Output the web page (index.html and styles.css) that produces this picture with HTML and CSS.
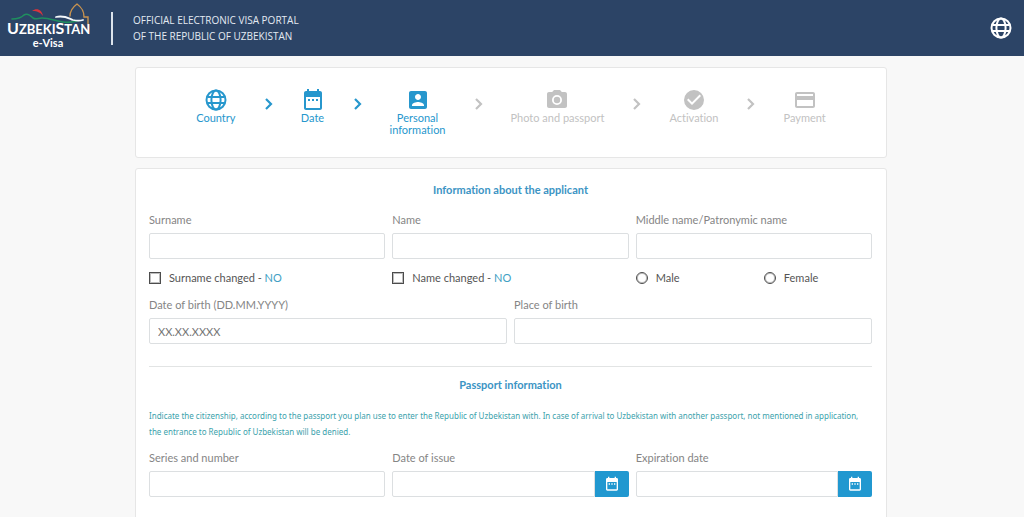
FILE: index.html
```html
<!DOCTYPE html>
<html lang="en">
<head>
<meta charset="utf-8">
<meta name="viewport" content="width=device-width, initial-scale=1">
<title>e-Visa</title>
<link rel="stylesheet" href="styles.css">
</head>
<body>
<svg class="sprite" aria-hidden="true">
  <symbol id="globe" viewBox="0 0 24 24"><g fill="none" stroke="currentColor" stroke-width="2"><circle cx="12" cy="12" r="9.500"/><ellipse cx="12" cy="12" rx="4.600" ry="9.500"/><path d="M3.500 9h17M3.500 15h17"/></g></symbol>
  <symbol id="calendar" viewBox="0 0 24 24"><path fill="currentColor" fill-rule="evenodd" d="M19 3h-1V1h-2v2H8V1H6v2H5c-1.100 0-2 .9-2 2v15c0 1.100.9 2 2 2h14c1.100 0 2-.9 2-2V5c0-1.100-.9-2-2-2zm0 17H5V9h14v11zM7 11h2v2H7zM11 11h2v2h-2zM15 11h2v2h-2z"/></symbol>
  <symbol id="person" viewBox="0 0 24 24"><path fill="currentColor" fill-rule="evenodd" d="M3 5v14c0 1.100.89 2 2 2h14c1.100 0 2-.9 2-2V5c0-1.100-.9-2-2-2H5c-1.110 0-2 .9-2 2zm12 4c0 1.660-1.340 3-3 3s-3-1.340-3-3 1.340-3 3-3 3 1.340 3 3zm-9 8c0-2 4-3.100 6-3.100s6 1.100 6 3.100v1H6v-1z"/></symbol>
  <symbol id="camera" viewBox="0 0 24 24"><path fill="currentColor" fill-rule="evenodd" d="M9 2 7.170 4H4c-1.100 0-2 .9-2 2v12c0 1.100.9 2 2 2h16c1.100 0 2-.9 2-2V6c0-1.100-.9-2-2-2h-3.170L15 2H9zm3 15a5 5 0 1 1 0-10 5 5 0 0 1 0 10zM12 8.800a3.200 3.200 0 1 0 0 6.400 3.200 3.200 0 0 0 0-6.400z"/></symbol>
  <symbol id="check" viewBox="0 0 24 24"><path fill="currentColor" fill-rule="evenodd" d="M12 2a10 10 0 1 0 0 20 10 10 0 0 0 0-20zm-2 15-5-5 1.410-1.410L10 14.170l7.590-7.590L19 8l-9 9z"/></symbol>
  <symbol id="card" viewBox="0 0 24 24"><path fill="currentColor" fill-rule="evenodd" d="M20 4H4c-1.110 0-2 .89-2 2v12c0 1.110.89 2 2 2h16c1.110 0 2-.89 2-2V6c0-1.110-.89-2-2-2zm0 14H4v-6h16v6zm0-10H4V6h16v2z"/></symbol>
  <symbol id="chevron" viewBox="0 0 9 14"><path fill="none" stroke="currentColor" stroke-width="2.200" d="M2 2l5 5-5 5"/></symbol>
</svg>

<header class="header">
  <a class="brand" href="#" aria-label="Uzbekistan e-Visa">
    <svg class="logo" viewBox="0 0 90 48">
      <g fill="none" stroke-linecap="round">
        <path stroke="#1f8f5f" stroke-width="1.600" d="M8 15c4 0 8 0 12-4 3-2 6 0 9 3 3 2 5 0 9 0 8 0 13 3 21 4 6 1 10 0 14-1"/>
        <path fill="#d8343c" d="M28 7c5-4 10-1 11 5-2-3-5-5-11-5z"/>
        <path stroke="#f4f8fb" stroke-width="1.800" d="M52 13c8-2 12 1 17 3 4 1 7 1 10 0"/>
        <path stroke="#c9934f" stroke-width="1.400" d="M66 12c0-6 3-9 7-12 4 3 7 6 7 13h4v14"/>
      </g>
      <text class="logo-word" x="3" y="30"><tspan class="logo-big">U</tspan>ZBEKI<tspan class="logo-big">S</tspan>TAN</text>
      <text class="logo-sub" x="44" y="43" text-anchor="middle">e-Visa</text>
    </svg>
  </a>
  <p class="portal">OFFICIAL ELECTRONIC VISA PORTAL<br>OF THE REPUBLIC OF UZBEKISTAN</p>
  <button class="language" type="button" aria-label="Language"><svg class="icon"><use href="#globe"/></svg></button>
</header>

<main class="content">
  <ol class="panel steps">
    <li class="step active"><svg class="icon"><use href="#globe"/></svg>Country</li>
    <li class="arrow active" aria-hidden="true"><svg class="chevron"><use href="#chevron"/></svg></li>
    <li class="step active"><svg class="icon"><use href="#calendar"/></svg>Date</li>
    <li class="arrow active" aria-hidden="true"><svg class="chevron"><use href="#chevron"/></svg></li>
    <li class="step active" aria-current="step"><svg class="icon"><use href="#person"/></svg>Personal<br>information</li>
    <li class="arrow" aria-hidden="true"><svg class="chevron"><use href="#chevron"/></svg></li>
    <li class="step"><svg class="icon"><use href="#camera"/></svg>Photo and passport</li>
    <li class="arrow" aria-hidden="true"><svg class="chevron"><use href="#chevron"/></svg></li>
    <li class="step"><svg class="icon"><use href="#check"/></svg>Activation</li>
    <li class="arrow" aria-hidden="true"><svg class="chevron"><use href="#chevron"/></svg></li>
    <li class="step"><svg class="icon"><use href="#card"/></svg>Payment</li>
  </ol>

  <form class="panel form">
    <h2 class="title">Information about the applicant</h2>
    <div class="row thirds">
      <div class="field"><label for="surname">Surname</label><input class="box" id="surname" type="text"></div>
      <div class="field"><label for="name">Name</label><input class="box" id="name" type="text"></div>
      <div class="field"><label for="middle">Middle name/Patronymic name</label><input class="box" id="middle" type="text"></div>
    </div>
    <div class="row thirds choices">
      <label class="choice"><input type="checkbox"><span>Surname changed - <span class="no">NO</span></span></label>
      <label class="choice"><input type="checkbox"><span>Name changed - <span class="no">NO</span></span></label>
      <div class="row genders">
        <label class="choice"><input type="radio" name="gender">Male</label>
        <label class="choice"><input type="radio" name="gender">Female</label>
      </div>
    </div>
    <div class="row halves">
      <div class="field"><label for="birth">Date of birth (DD.MM.YYYY)</label><input class="box" id="birth" type="text" placeholder="XX.XX.XXXX"></div>
      <div class="field"><label for="place">Place of birth</label><input class="box" id="place" type="text"></div>
    </div>
    <hr class="rule">
    <h2 class="title">Passport information</h2>
    <p class="notice">Indicate the citizenship, according to the passport you plan use to enter the Republic of Uzbekistan with. In case of arrival to Uzbekistan with another passport, not mentioned in application,<br>the entrance to Republic of Uzbekistan will be denied.</p>
    <div class="row thirds">
      <div class="field"><label for="series">Series and number</label><input class="box" id="series" type="text"></div>
      <div class="field"><label for="issue">Date of issue</label>
        <div class="picker"><input class="box" id="issue" type="text"><button type="button" aria-label="Choose date of issue"><svg class="icon-small"><use href="#calendar"/></svg></button></div></div>
      <div class="field"><label for="expiry">Expiration date</label>
        <div class="picker"><input class="box" id="expiry" type="text"><button type="button" aria-label="Choose expiration date"><svg class="icon-small"><use href="#calendar"/></svg></button></div></div>
    </div>
  </form>
</main>
</body>
</html>
```
FILE: styles.css
```css
* { box-sizing: border-box; }
body {
  margin: 0;
  background: #f8f8f8;
  color: #555;
  font: 11px/16px Lato, "Open Sans", sans-serif;
  font-variant-ligatures: none;
}
.sprite { position: absolute; width: 0; height: 0; }
svg { display: block; }
.icon { width: 24px; height: 24px; }
.icon-small { width: 16px; height: 16px; }

.header {
  display: flex;
  align-items: center;
  height: 56px;
  padding: 0 11px 0 4px;
  background: #2c4466;
  color: #e3eaf2;
}
.brand { padding-right: 17px; }
.logo { width: 90px; height: 48px; overflow: visible; }
.logo-word { fill: #fff; font-size: 13px; font-weight: 700; }
.logo-big { font-size: 16px; }
.logo-sub { fill: #fff; font-size: 11px; font-weight: 700; }
.portal {
  display: flex;
  align-items: center;
  min-height: 33px;
  margin: 0;
  padding-left: 20px;
  border-left: 2px solid #dce4ec;
  font-family: "Open Sans", sans-serif;
  font-size: 10px;
}
.language {
  margin-left: auto;
  padding: 0;
  border: 0;
  background: none;
  color: #fff;
}

.content {
  display: grid;
  gap: 10px;
  max-width: 778px;
  margin: 0 auto;
  padding: 11px 14px 0 12px;
}
.panel {
  min-width: 0;
  margin: 0;
  background: #fff;
  border: 1px solid #e6e6e6;
  border-radius: 3px;
}
.steps {
  display: flex;
  justify-content: center;
  gap: 28px;
  min-height: 91px;
  padding: 20px 0;
  list-style: none;
  color: #c2c2c2;
  line-height: 12px;
  text-align: center;
}
.step { display: flex; flex-direction: column; align-items: center; }
.arrow { padding-top: 9px; }
.chevron { width: 9px; height: 14px; }
.steps .active { color: #2797cd; }

.form { padding: 13px 14px 22px 13px; }
.title {
  margin: 0 0 14px;
  color: #3b94c4;
  font-size: 11px;
  font-weight: 700;
  text-align: center;
}
.row { display: grid; column-gap: 7px; }
.thirds { grid-template-columns: repeat(3, 1fr); }
.halves, .genders { grid-template-columns: repeat(2, 1fr); }
.genders { column-gap: 20px; }
.field label { display: block; margin-bottom: 5px; color: #858585; }
.box {
  display: block;
  width: 100%;
  min-width: 0;
  height: 26px;
  padding: 0 8px;
  border: 1px solid #dcdfe1;
  border-radius: 2px;
  background: #fff;
  color: #666;
  font: inherit;
}
.box::placeholder { color: #757575; opacity: 1; }
.choices { margin: 11px 0; }
.choice { display: flex; align-items: center; gap: 8px; }
.choice input {
  flex: none;
  appearance: none;
  width: 12px;
  height: 12px;
  margin: 0;
  border: 1px solid #4c4c4c;
  box-shadow: inset 0 0 0 1px #bdbdbd;
}
.choice input:checked { background: #2198d0; }
.choice input[type="radio"] { border-radius: 50%; }
.no { color: #41a0c4; }
.rule { margin: 22px 0 10px; border: 0; border-top: 1px solid #e2e4e4; }
.notice {
  margin: 15px 0 10px;
  color: #3ba2ac;
  font-family: "Noto Sans", "Open Sans", sans-serif;
  font-size: 8px;
}
.picker { display: flex; }
.picker .box { flex: 1; border-radius: 2px 0 0 2px; }
.picker button {
  display: grid;
  place-items: center;
  width: 34px;
  padding: 0;
  border: 0;
  border-radius: 0 2px 2px 0;
  background: #2198d0;
  color: #fff;
}
```
